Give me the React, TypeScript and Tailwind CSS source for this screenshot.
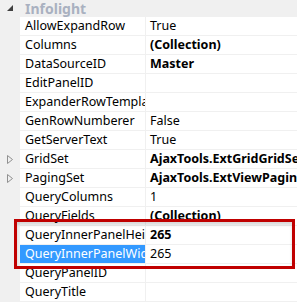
import React from "react";

type Row = { name: string; value: string; bold?: boolean; expand?: boolean; selected?: boolean };

const rows: Row[] = [
  { name: "AllowExpandRow", value: "True" },
  { name: "Columns", value: "(Collection)", bold: true },
  { name: "DataSourceID", value: "Master", bold: true },
  { name: "EditPanelID", value: "" },
  { name: "ExpanderRowTemplate", value: "" },
  { name: "GenRowNumberer", value: "False" },
  { name: "GetServerText", value: "True" },
  { name: "GridSet", value: "AjaxTools.ExtGridGridSet", bold: true, expand: true },
  { name: "PagingSet", value: "AjaxTools.ExtViewPagingSet", bold: true, expand: true },
  { name: "QueryColumns", value: "1" },
  { name: "QueryFields", value: "(Collection)", bold: true },
  { name: "QueryInnerPanelHeight", value: "265", bold: true },
  { name: "QueryInnerPanelWidth", value: "265", selected: true },
  { name: "QueryPanelID", value: "" },
  { name: "QueryTitle", value: "" },
];

export default function App() {
  return (
    <div
      className="relative w-[297px] h-[302px] overflow-hidden bg-white text-[12.5px] text-black"
      style={{ fontFamily: '"Noto Sans", "Open Sans", sans-serif' }}
    >
      <div className="flex h-[17px] bg-[#f0f0f0] items-center">
        <div className="w-[20px] flex justify-center">
          <svg width="7" height="7" viewBox="0 0 7 7">
            <polygon points="6,0 6,6 0,6" fill="#404040" />
          </svg>
        </div>
        <span className="ml-[5px] font-bold text-[#a9b1c0] text-[14px] leading-none">Infolight</span>
      </div>
      {rows.map((r) => (
        <div key={r.name} className="flex h-[19px]">
          <div className="w-[20px] bg-[#f0f0f0] flex items-center justify-center shrink-0">
            {r.expand && (
              <svg width="6" height="9" viewBox="0 0 6 9">
                <polygon points="0.5,0.5 5.5,4.5 0.5,8.5" fill="none" stroke="#909090" strokeWidth="1" />
              </svg>
            )}
          </div>
          <div
            className={`w-[126px] shrink-0 border-b border-r border-[#f0f0f0] pl-[5px] flex items-center overflow-hidden whitespace-nowrap leading-none ${
              r.selected ? "bg-[#3399ff] text-white" : ""
            }`}
          >
            {r.name}
          </div>
          <div
            className={`flex-1 border-b border-[#f0f0f0] pl-[4px] flex items-center overflow-hidden whitespace-nowrap leading-none ${
              r.bold ? "font-bold" : ""
            }`}
          >
            {r.value}
          </div>
        </div>
      ))}
      <div className="absolute left-[14px] top-[219px] w-[281px] h-[50px] border-[3px] border-[#c00000] shadow-[inset_0_3px_3px_rgba(0,0,0,0.15)]" />
    </div>
  );
}
